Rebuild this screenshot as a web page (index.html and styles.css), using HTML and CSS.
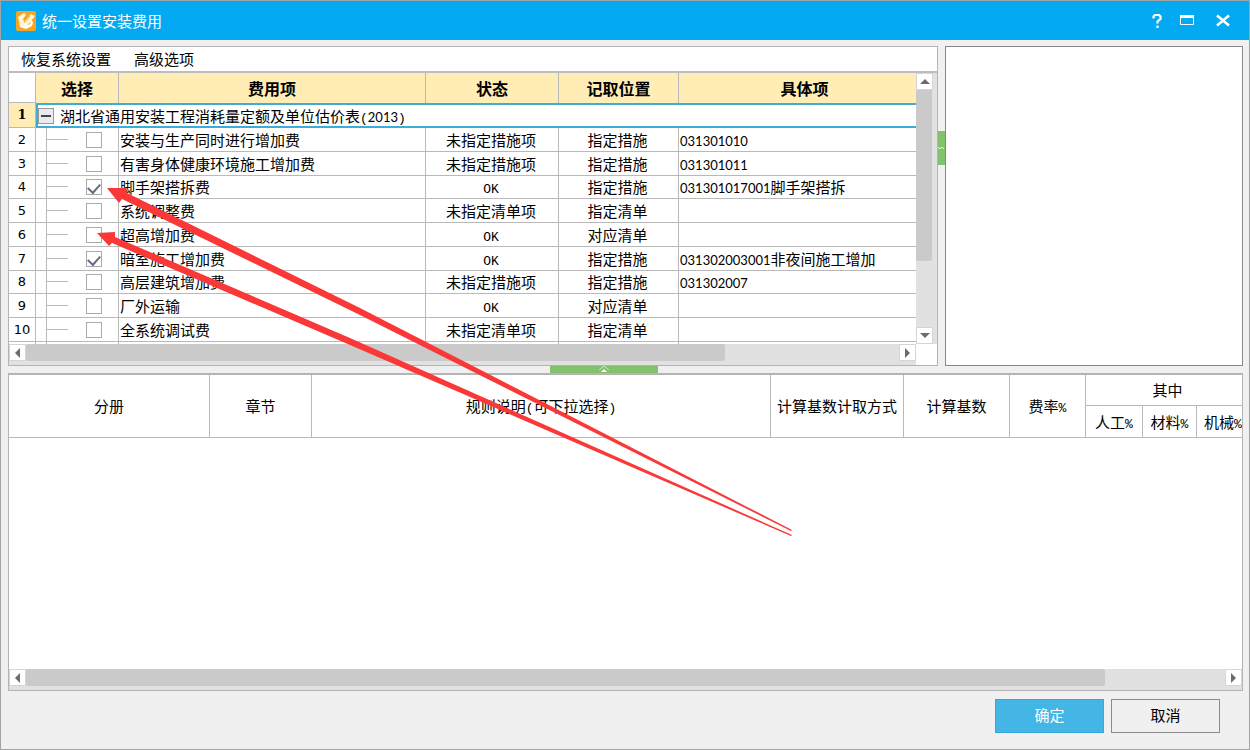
FILE: index.html
```html
<!DOCTYPE html>
<html lang="zh-CN">
<head>
<meta charset="utf-8">
<title>统一设置安装费用</title>
<link rel="stylesheet" href="styles.css">
</head>
<body>
<div class="window">
  <header class="titlebar">
    <svg class="logo" viewBox="0 0 20 20" aria-hidden="true">
      <rect width="20" height="20" rx="2" fill="#f9a51f"/>
      <path d="M2 6l6-4 2 2-3 4 1 3 7-8 4 2-8 10-3 1-3-2-2-4z" fill="#fff6df"/>
      <path d="M15 9l2 2-1 4-6 3-6-2-1-5 3 4 4 0 4-2z" fill="#fff"/>
      <path d="M8 12l6-7" stroke="#f3b354" stroke-width="1"/>
    </svg>
    <h1 class="title">统一设置安装费用</h1>
    <div class="win-actions">
      <button class="win-btn" aria-label="帮助"><svg viewBox="0 0 14 14"><path d="M3.500 4.500V2.500L5 1h4l1.500 1.500v2.500L7.500 7.500V9.500M7.500 11.500v2.500" fill="none" stroke="#fff" stroke-width="2.200"/></svg></button>
      <button class="win-btn" aria-label="最大化"><svg viewBox="0 0 14 14"><path d="M.5 1.500h13v9H.5z" fill="none" stroke="#fff"/><path d="M0 1h14v3H0z" fill="#fff"/></svg></button>
      <button class="win-btn close" aria-label="关闭"><svg viewBox="0 0 14 14"><path d="M1 1.500l12 10M13 1.500L1 11.500" stroke="#fff" stroke-width="2.600"/></svg></button>
    </div>
  </header>

  <main class="content">
    <div class="upper">
      <section class="panel fee-panel">
        <nav class="toolbar">
          <button class="tool">恢复系统设置</button>
          <button class="tool">高级选项</button>
        </nav>
        <div class="grid-area">
          <div class="grid-view">
            <table class="fees">
              <colgroup><col class="c-num"><col class="c-tree"><col class="c-box"><col class="c-fee"><col class="c-state"><col class="c-pos"><col></colgroup>
              <thead>
                <tr><th class="corner"></th><th colspan="2">选择</th><th>费用项</th><th>状态</th><th>记取位置</th><th class="item">具体项</th></tr>
              </thead>
              <tbody>
                <tr class="group"><th class="num">1</th><td colspan="6"><div class="group-line"><button class="fold" aria-label="折叠"></button><span>湖北省通用安装工程消耗量定额及单位估价表<span class="mono">(</span><span class="code">2013</span><span class="mono">)</span></span></div></td></tr>
                <tr><th class="num">2</th><td></td><td class="box"><input type="checkbox" id="f2"></td><td><label for="f2">安装与生产同时进行增加费</label></td><td class="mid">未指定措施项</td><td class="mid">指定措施</td><td><span class="code">031301010</span></td></tr>
                <tr><th class="num">3</th><td></td><td class="box"><input type="checkbox" id="f3"></td><td><label for="f3">有害身体健康环境施工增加费</label></td><td class="mid">未指定措施项</td><td class="mid">指定措施</td><td><span class="code">031301011</span></td></tr>
                <tr><th class="num">4</th><td></td><td class="box"><input type="checkbox" id="f4" checked></td><td><label for="f4">脚手架搭拆费</label></td><td class="mid"><span class="mono">OK</span></td><td class="mid">指定措施</td><td><span class="code">031301017001</span>脚手架搭拆</td></tr>
                <tr><th class="num">5</th><td></td><td class="box"><input type="checkbox" id="f5"></td><td><label for="f5">系统调整费</label></td><td class="mid">未指定清单项</td><td class="mid">指定清单</td><td></td></tr>
                <tr><th class="num">6</th><td></td><td class="box"><input type="checkbox" id="f6"></td><td><label for="f6">超高增加费</label></td><td class="mid"><span class="mono">OK</span></td><td class="mid">对应清单</td><td></td></tr>
                <tr><th class="num">7</th><td></td><td class="box"><input type="checkbox" id="f7" checked></td><td><label for="f7">暗室施工增加费</label></td><td class="mid"><span class="mono">OK</span></td><td class="mid">指定措施</td><td><span class="code">031302003001</span>非夜间施工增加</td></tr>
                <tr><th class="num">8</th><td></td><td class="box"><input type="checkbox" id="f8"></td><td><label for="f8">高层建筑增加费</label></td><td class="mid">未指定措施项</td><td class="mid">指定措施</td><td><span class="code">031302007</span></td></tr>
                <tr><th class="num">9</th><td></td><td class="box"><input type="checkbox" id="f9"></td><td><label for="f9">厂外运输</label></td><td class="mid"><span class="mono">OK</span></td><td class="mid">对应清单</td><td></td></tr>
                <tr><th class="num">10</th><td></td><td class="box"><input type="checkbox" id="f10"></td><td><label for="f10">全系统调试费</label></td><td class="mid">未指定清单项</td><td class="mid">指定清单</td><td></td></tr>
                <tr aria-hidden="true"><th class="num"></th><td></td><td></td><td></td><td></td><td></td><td></td></tr>
              </tbody>
            </table>
          </div>
          <div class="vbar">
            <button class="arrow up" aria-label="向上"></button>
            <div class="vtrack"><div class="vthumb"></div></div>
            <button class="arrow down" aria-label="向下"></button>
          </div>
          <div class="hbar">
            <button class="arrow left" aria-label="向左"></button>
            <div class="htrack"><div class="hthumb fee-thumb"></div></div>
            <button class="arrow right" aria-label="向右"></button>
          </div>
          <div class="bar-corner"></div>
        </div>
      </section>
      <div class="splitter-v"><div class="grip-v"><svg viewBox="0 0 6 6"><path d="M0 2l2 2 2-2 2 2" fill="none" stroke="#e8f5e2"/></svg></div></div>
      <section class="panel detail-panel"></section>
    </div>

    <div class="splitter-h"><div class="grip-h"><svg viewBox="0 0 12 6"><path d="M1 4l5-4 5 4" fill="none" stroke="#c8eabc"/><path d="M3 6l3-3 3 3z" fill="#fff"/></svg></div></div>

    <section class="panel rule-panel">
      <div class="rule-view">
        <table class="rules">
          <colgroup><col class="r-book"><col class="r-chapter"><col><col class="r-method"><col class="r-base"><col class="r-rate"><col class="r-labor"><col class="r-part"><col class="r-machine"></colgroup>
          <thead>
            <tr><th rowspan="2">分册</th><th rowspan="2">章节</th><th rowspan="2">规则说明<span class="mono">(</span>可下拉选择<span class="mono">)</span></th><th rowspan="2">计算基数计取方式</th><th rowspan="2">计算基数</th><th rowspan="2">费率<span class="mono">%</span></th><th colspan="3">其中</th></tr>
            <tr><th>人工<span class="mono">%</span></th><th>材料<span class="mono">%</span></th><th>机械<span class="mono">%</span></th></tr>
          </thead>
        </table>
      </div>
      <div class="hbar">
        <button class="arrow left" aria-label="向左"></button>
        <div class="htrack"><div class="hthumb rule-thumb"></div></div>
        <button class="arrow right" aria-label="向右"></button>
      </div>
    </section>
  </main>

  <footer class="actions">
    <button class="btn primary">确定</button>
    <button class="btn">取消</button>
  </footer>

  <svg class="pointers" width="800" height="545" viewBox="0 0 800 545" aria-hidden="true">
    <path d="M107 188L126 188L127 193L360 308L792 530L791 531L360 315L122 199L119 203z"/>
    <path d="M97 233L115 232L115 237L350 338L792 535L791 536L350 345L112 243L109 246z"/>
  </svg>
</div>
</body>
</html>
```
FILE: styles.css
```css
* { box-sizing: border-box; }

body {
  margin: 0;
  font: 15px/20px "Noto Sans CJK SC", sans-serif;
  color: #000;
}

button { font: inherit; color: inherit; padding: 0; border: 0; background: none; }

.window {
  position: relative;
  display: flex;
  flex-direction: column;
  height: 100vh;
  background: #f0f0f0;
  border: 1px solid #a3a3a3;
}

.titlebar {
  display: flex;
  align-items: center;
  height: 39px;
  padding: 0 19px 0 15px;
  background: #03a9f1;
  color: #fff;
}
.logo { width: 20px; height: 20px; margin-right: 6px; }
.title { flex: 1; margin: 0; font-size: 15px; font-weight: 400; }
.win-actions { display: flex; gap: 16px; }
.win-btn { display: flex; width: 14px; height: 14px; }
.win-btn svg { width: 14px; height: 14px; }
.close { margin-left: 6px; }

.content {
  flex: 1;
  display: flex;
  flex-direction: column;
  min-height: 0;
  padding: 6px 6px 0 7px;
}

.panel { background: #fff; border: 1px solid #b4b4b4; }

.upper { display: flex; height: 320px; }
.fee-panel { flex: 932 1 0; min-width: 0; display: flex; flex-direction: column; }
.detail-panel { flex: 297 1 0; border-color: #888; }

.splitter-v { display: flex; align-items: center; width: 7px; }
.grip-v { display: flex; align-items: center; width: 7px; height: 34px; margin-bottom: 116px; background: #82c26c; }
.grip-v svg { width: 6px; height: 6px; }
.splitter-h { display: flex; justify-content: center; height: 7px; padding-right: 44px; }
.grip-h { display: flex; justify-content: center; width: 108px; height: 7px; background: #82c26c; }
.grip-h svg { width: 12px; height: 6px; }

.toolbar { display: flex; gap: 23px; height: 26px; padding-left: 12px; border-bottom: 2px solid #bdbdbd; }

.grid-area {
  flex: 1;
  min-height: 0;
  display: grid;
  grid-template-columns: 1fr 21px;
  grid-template-rows: 1fr 21px;
}
.grid-view, .rule-view { overflow: hidden; min-height: 0; min-width: 0; }

table { border-collapse: separate; border-spacing: 0; table-layout: fixed; }
th, td {
  padding: 0;
  border-right: 1px solid #b9b9b9;
  border-bottom: 1px solid #b9b9b9;
  white-space: nowrap;
  font-weight: 400;
  line-height: 20px;
}

.fees { width: 100%; }
.c-num { width: 27px; }
.c-tree { width: 11px; }
.c-box { width: 72px; }
.c-fee { width: 307px; }
.c-state { width: 133px; }
.c-pos { width: 120px; }
.fees tr > :last-child { border-right: 0; }
.fees thead th { height: 30px; background: #ffedb5; font-size: 16px; font-weight: 700; border-bottom: 0; }
.fees thead .corner { background: #fff; border-bottom: 1px solid #b9b9b9; }
.fees thead .item { padding-left: 14px; }
.fees tbody tr { height: 24px; }
.fees tbody tr:nth-child(4n) { height: 23px; }
.fees tbody .group { height: 25px; }
.fees td { padding-left: 1px; overflow: hidden; }
.fees .mid { padding: 0 2px 0 0; text-align: center; }
.fees .num { font-family: "DejaVu Sans", sans-serif; font-size: 13px; text-align: center; }
.fees .group .num { background: #ffedb5; font-family: "DejaVu Serif", serif; font-weight: 700; }
.fees .group td { padding: 0; border: 2px solid #3badd8; border-right: 0; }
.group-line { display: flex; align-items: center; gap: 6px; height: 20px; }
.fold {
  display: flex;
  align-items: center;
  justify-content: center;
  width: 16px;
  height: 16px;
  border: 1px solid #999;
  background: #e9ebee;
}
.fold::after { content: ""; width: 10px; height: 2px; background: #444; }

.fees td.box { padding: 0; background: linear-gradient(#bbb, #bbb) 0 48% / 21px 1px no-repeat; }
.box input {
  appearance: none;
  display: flex;
  justify-content: center;
  width: 16px;
  height: 16px;
  margin: 0 0 0 39px;
  padding-top: 1px;
  border: 1px solid #aaa;
  background: #fff;
}
.box input:checked::after {
  content: "";
  width: 6px;
  height: 10px;
  border: solid #666b82;
  border-width: 0 2px 2px 0;
  transform: rotate(42deg);
}

.code, .mono { font-size: 13px; line-height: 12px; }
.code { font-family: Lato, sans-serif; }
.mono { font-family: "Liberation Mono", monospace; }

.vbar { display: flex; flex-direction: column; padding-right: 5px; background: #e1e1e1; }
.vtrack { flex: 1; }
.vthumb { height: 72%; background: #cacaca; border-radius: 0 0 2px 2px; }
.hbar { display: flex; height: 21px; padding-bottom: 4px; background: #e1e1e1; }
.htrack { flex: 1; }
.hthumb { height: 17px; background: #cacaca; border-radius: 2px; }
.fee-thumb { width: 80%; }
.rule-thumb { width: 90%; }
.bar-corner { background: #fff; }

.arrow {
  display: flex;
  align-items: center;
  justify-content: center;
  width: 17px;
  height: 17px;
  background: #fff;
  border: 1px solid #d5d5d5;
}
.arrow::after { content: ""; border: 5px solid transparent; }
.up::after { border-top: 0; border-bottom-color: #6c6b74; }
.down::after { border-bottom: 0; border-top-color: #6c6b74; }
.left::after { border-left: 0; border-right-color: #6c6b74; }
.right::after { border-right: 0; border-left-color: #6c6b74; }

.rule-panel { flex: 1; min-height: 0; display: flex; flex-direction: column; border-top-width: 2px; }
.rule-view { flex: 1; }
.rules { width: calc(100% + 8px); }
.rules th { height: 32px; }
.rules tr:first-child th:last-child { height: 31px; }
.r-book { width: 201px; }
.r-chapter { width: 102px; }
.r-method { width: 133px; }
.r-base { width: 106px; }
.r-rate { width: 76px; }
.r-labor { width: 57px; }
.r-part { width: 54px; }
.r-machine { width: 53px; }

.actions { display: flex; justify-content: flex-end; gap: 7px; padding: 8px 29px 16px; }
.btn { width: 109px; height: 34px; padding-bottom: 2px; border: 1px solid #8c8c8c; background: #f0f0f0; }
.primary { border-color: #36a9dc; background: #43b6e6; color: #fff; }

.pointers { position: absolute; left: -1px; top: -1px; fill: #fb3838; pointer-events: none; }
```
